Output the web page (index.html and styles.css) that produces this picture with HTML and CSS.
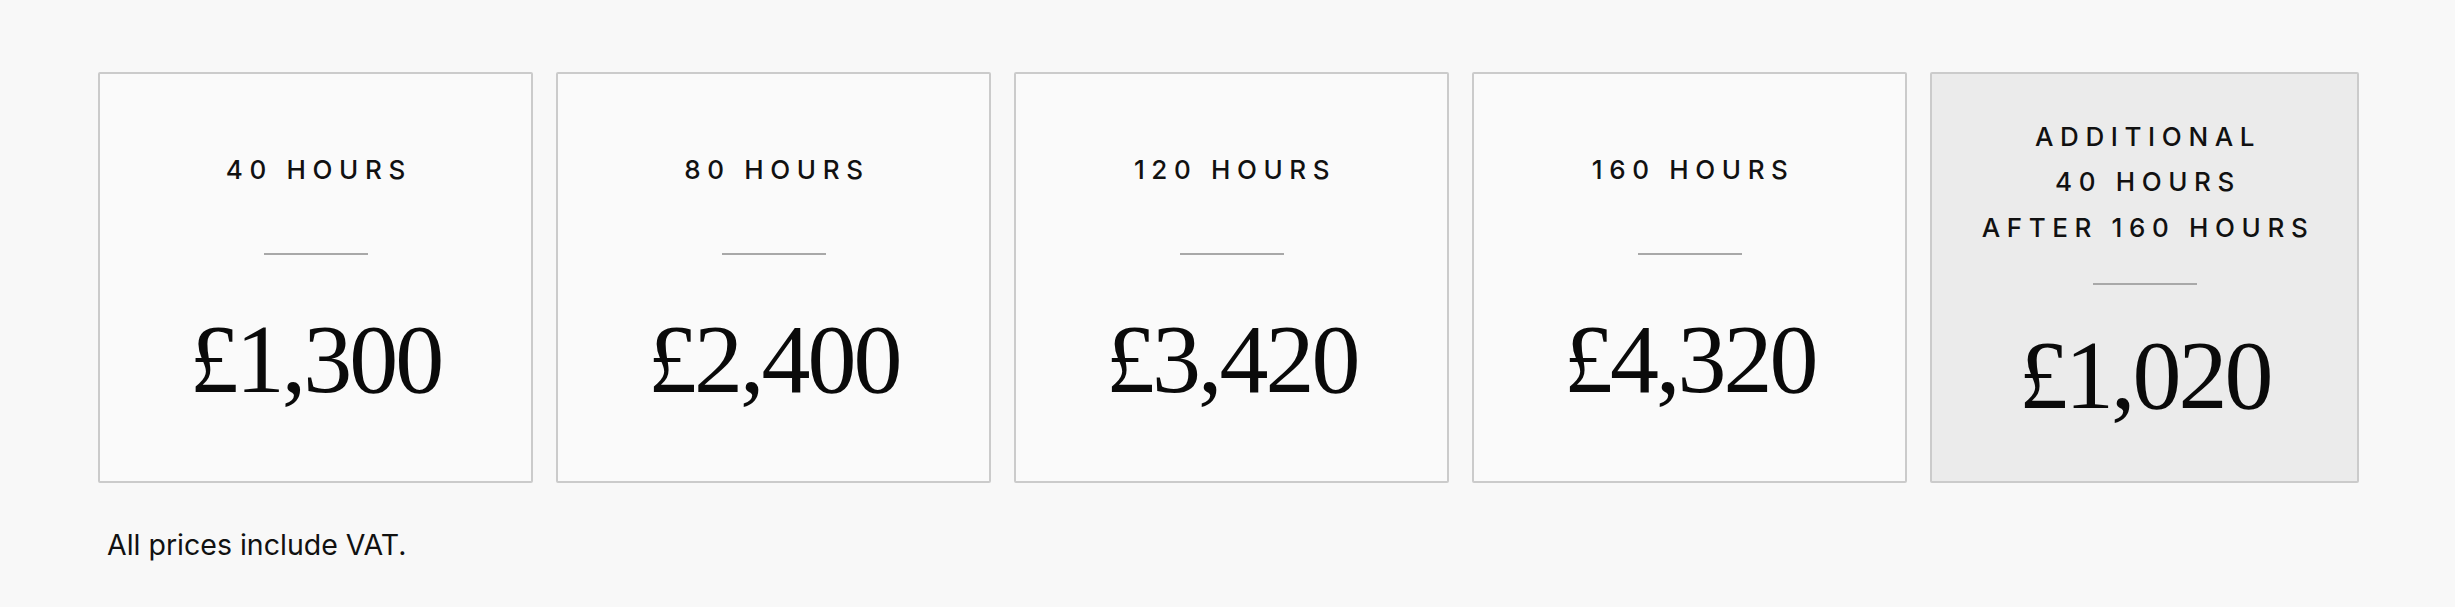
FILE: index.html
```html
<!DOCTYPE html>
<html lang="en">
<head>
<meta charset="utf-8">
<title>Prices</title>
<link rel="stylesheet" href="styles.css">
</head>
<body>
<main class="pricing">
  <div class="cards">
    <div class="card">
      <div class="label">40 HOURS</div>
      <div class="rule"></div>
      <div class="price">£1,300</div>
    </div>
    <div class="card">
      <div class="label">80 HOURS</div>
      <div class="rule"></div>
      <div class="price">£2,400</div>
    </div>
    <div class="card">
      <div class="label">120 HOURS</div>
      <div class="rule"></div>
      <div class="price">£3,420</div>
    </div>
    <div class="card">
      <div class="label">160 HOURS</div>
      <div class="rule"></div>
      <div class="price">£4,320</div>
    </div>
    <div class="card card-extra">
      <div class="label">ADDITIONAL<br>40 HOURS<br>AFTER 160 HOURS</div>
      <div class="rule"></div>
      <div class="price">£1,020</div>
    </div>
  </div>
  <p class="note">All prices include VAT.</p>
</main>
</body>
</html>
```
FILE: styles.css
```css
html, body {
  margin: 0;
  padding: 0;
  background: #f8f8f8;
}
body {
  font-family: Inter, "Liberation Sans", sans-serif;
  color: #111;
}
.pricing {
  padding: 72px 96px 0 98px;
}
.cards {
  display: grid;
  grid-template-columns: repeat(4, 1fr) 0.985fr;
  gap: 23px;
}
.card {
  height: 411px;
  box-sizing: border-box;
  border: 2px solid #cbcbcb;
  border-radius: 2px;
  background: #fafafa;
  display: flex;
  flex-direction: column;
  align-items: center;
  justify-content: center;
  text-align: center;
}
.card-extra {
  background: #ebebeb;
  padding-bottom: 17px;
}
.label {
  font-size: 26px;
  line-height: 45.5px;
  letter-spacing: 0.255em;
  margin-right: -0.255em;
  font-weight: 500;
  color: #111;
}
.rule {
  width: 104px;
  height: 2px;
  background: #a8a8a8;
  margin-top: 61px;
}
.card-extra .rule {
  margin-top: 33px;
}
.price {
  font-family: "Liberation Serif", "Times New Roman", serif;
  font-size: 98px;
  line-height: 98px;
  letter-spacing: -3px;
  margin-top: 55px;
  color: #0a0a0a;
}
.card-extra .price {
  margin-top: 41px;
}
.note {
  margin: 42px 0 0 9px;
  font-size: 28.5px;
  line-height: 40px;
  color: #111;
}
```
